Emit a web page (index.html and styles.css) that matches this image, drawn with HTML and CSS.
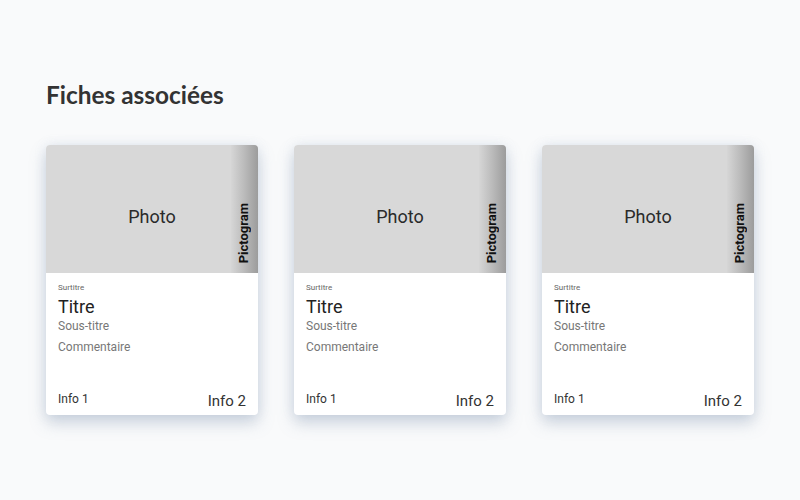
FILE: index.html
```html
<!DOCTYPE html>
<html lang="fr">
<head>
<meta charset="utf-8">
<link rel="stylesheet" href="styles.css">
</head>
<body>
<main class="page">
  <h1 class="title">Fiches associées</h1>
  <div class="cards">
    <article class="card">
      <div class="media">
        <span class="photo">Photo</span>
        <div class="picto"><span>Pictogram</span></div>
      </div>
      <div class="body">
        <div class="surtitre">Surtitre</div>
        <div class="titre">Titre</div>
        <div class="soustitre">Sous-titre</div>
        <div class="comment">Commentaire</div>
        <div class="infos"><span class="info1">Info 1</span><span class="info2">Info 2</span></div>
      </div>
    </article>
    <article class="card">
      <div class="media">
        <span class="photo">Photo</span>
        <div class="picto"><span>Pictogram</span></div>
      </div>
      <div class="body">
        <div class="surtitre">Surtitre</div>
        <div class="titre">Titre</div>
        <div class="soustitre">Sous-titre</div>
        <div class="comment">Commentaire</div>
        <div class="infos"><span class="info1">Info 1</span><span class="info2">Info 2</span></div>
      </div>
    </article>
    <article class="card">
      <div class="media">
        <span class="photo">Photo</span>
        <div class="picto"><span>Pictogram</span></div>
      </div>
      <div class="body">
        <div class="surtitre">Surtitre</div>
        <div class="titre">Titre</div>
        <div class="soustitre">Sous-titre</div>
        <div class="comment">Commentaire</div>
        <div class="infos"><span class="info1">Info 1</span><span class="info2">Info 2</span></div>
      </div>
    </article>
  </div>
</main>
</body>
</html>
```
FILE: styles.css
```css
* { box-sizing: border-box; }
html, body { margin: 0; padding: 0; }
body {
  background: #f9fafb;
  font-family: Roboto, "Liberation Sans", sans-serif;
  width: 800px;
  height: 500px;
  overflow: hidden;
}
.page {
  padding: 80px 46px 0 46px;
}
.title {
  margin: 0;
  font-family: Lato, "Open Sans", sans-serif;
  font-weight: 700;
  font-size: 24.4px;
  line-height: 30px;
  color: #333;
}
.cards {
  display: flex;
  gap: 36px;
  margin-top: 35px;
}
.card {
  width: 212px;
  height: 270px;
  background: #fff;
  border-radius: 4px;
  overflow: hidden;
  box-shadow: 0 8px 16px rgba(120, 140, 170, 0.35), 0 0 12px rgba(150, 170, 200, 0.18);
  display: flex;
  flex-direction: column;
}
.media {
  height: 128px;
  background: #d8d8d8;
  display: flex;
  flex-shrink: 0;
}
.photo {
  flex: 1;
  display: flex;
  align-items: center;
  justify-content: center;
  padding-top: 15px;
  padding-left: 27px;
  font-size: 18px;
  color: #2a2a2a;
}
.picto {
  width: 27px;
  background: linear-gradient(to right, #d6d6d6 0%, #bdbdbd 45%, #9c9c9c 100%);
  display: flex;
  align-items: flex-end;
  justify-content: center;
  padding-bottom: 10px;
}
.picto span {
  writing-mode: vertical-rl;
  transform: rotate(180deg);
  font-size: 13px;
  font-weight: 700;
  color: #111;
  line-height: 13px;
  margin-right: 2px;
}
.body {
  flex: 1;
  display: flex;
  flex-direction: column;
  padding: 10px 12px 5px 12px;
}
.surtitre {
  font-size: 8px;
  line-height: 10px;
  color: #666;
}
.titre {
  font-size: 18px;
  line-height: 22px;
  color: #222;
  margin-top: 3px;
}
.soustitre {
  font-size: 12px;
  line-height: 14px;
  color: #777;
  margin-top: 1px;
}
.comment {
  font-size: 12px;
  line-height: 14px;
  color: #777;
  margin-top: 7px;
}
.infos {
  margin-top: auto;
  display: flex;
  justify-content: space-between;
  align-items: flex-start;
  color: #333;
}
.info1 { font-size: 12px; line-height: 14px; }
.info2 { font-size: 15px; line-height: 18px; }
```
